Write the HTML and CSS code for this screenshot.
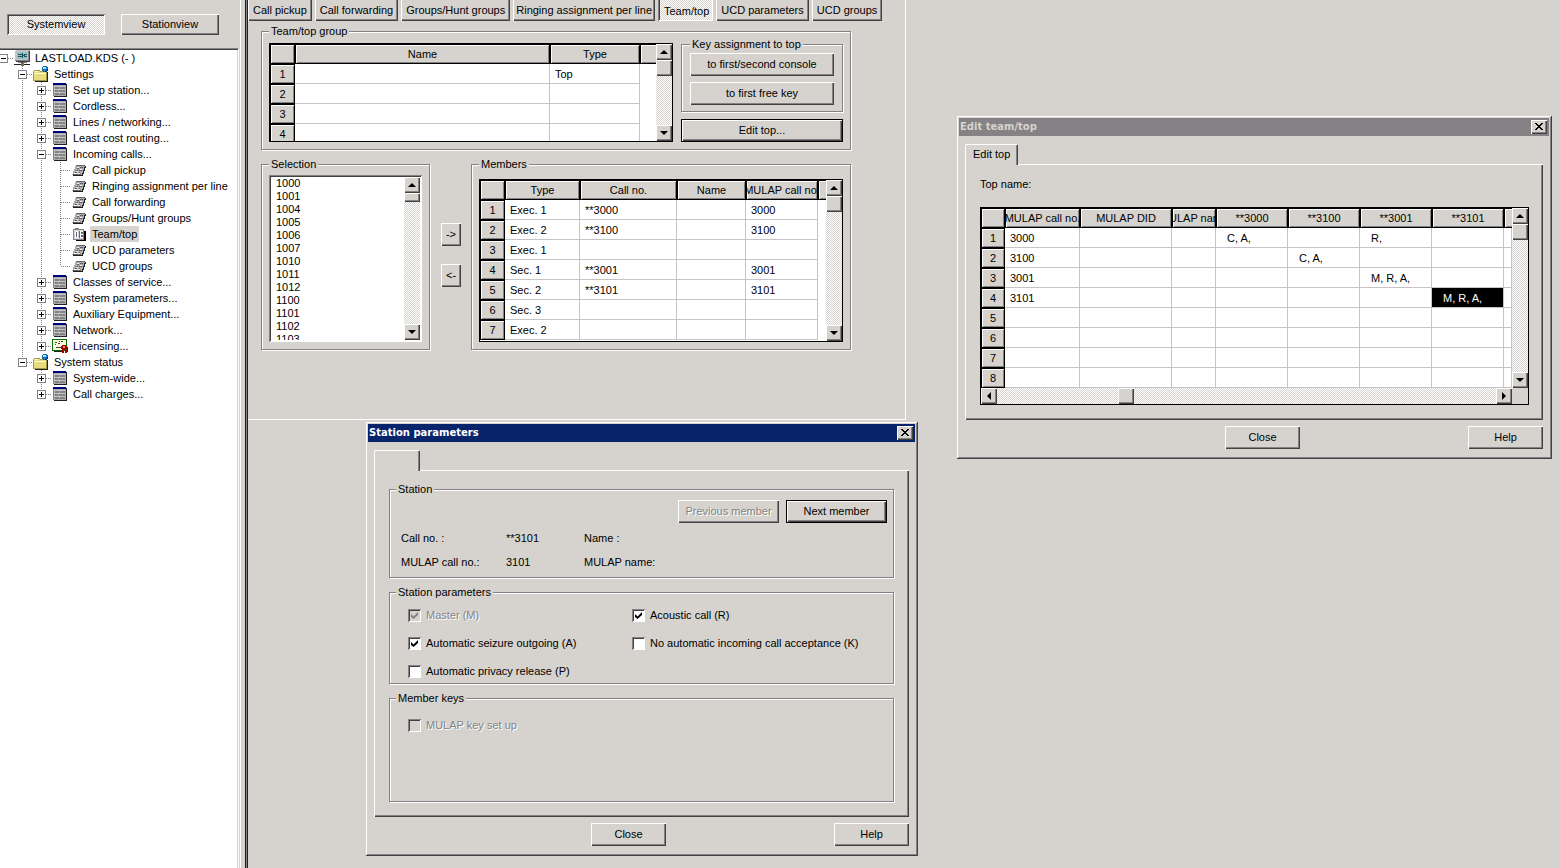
FILE: index.html
```html
<!DOCTYPE html>
<html lang="en">
<head>
<meta charset="utf-8">
<title>LASTLOAD.KDS</title>
<link rel="stylesheet" href="styles.css">
</head>
<body>
<svg class="sprite" aria-hidden="true">
  <symbol id="i-root" viewBox="0 0 18 16">
    <path fill="#848284" d="M1 1h14v10H1z"/><path fill="#c6c3c6" d="M2 0h14v1H2zM1 1h13v9H1z"/><path fill="#424142" d="M15 1h1v11H2v-1h13z"/>
    <path fill="#8cc7ce" d="M3 2h10v7H3z"/><path fill="#215152" d="M4 4h4v1H4zM4 6h4v1H4zM8 3h1v5H8zM10 4h3v1h-3zM10 6h3v1h-3zM9 5h2v1H9z"/>
    <path fill="#848284" d="M4 12h9v1H4z"/><path fill="#212021" d="M0 14h16v1H0zM8 12h1v2H8z"/><path fill="#846d42" d="M7 13h3v3H7z"/>
  </symbol>
  <symbol id="i-folder" viewBox="0 0 16 16">
    <path fill="#9c9a42" d="M1 4h5l1 1h7v10H0V5z"/><path fill="#e7db7b" d="M1 5h5l1 1h6v8H1z"/><path fill="#fffbce" d="M1 7h12v1H1zM1 5h4v1H1z"/>
    <path fill="#212021" d="M14 6h1v10H2v-1h12z"/>
    <circle cx="12" cy="3" r="3" fill="#1871b5"/><path fill="#9cefff" d="M10 1h3v2h-3z"/><path fill="#08246b" d="M12 5h2v1h-2zM14 3h1v2h-1z"/>
  </symbol>
  <symbol id="i-table" viewBox="0 0 16 16">
    <path fill="#212021" d="M2 2h13v13H2z"/><path fill="#00007b" d="M1 1h13v2H1z"/><path fill="#adaaad" d="M1 3h13v11H1z"/>
    <path fill="#848284" d="M1 3h1v11H1zM3 5h4v2H3zM8 5h5v2H8zM3 8h3v2H3zM7 8h6v2H7zM3 11h4v2H3zM8 11h5v2H8z"/><path fill="#c6c3c6" d="M2 4h11v1H2zM2 7h11v1H2zM2 10h11v1H2z"/>
  </symbol>
  <symbol id="i-key" viewBox="0 0 16 16">
    <path fill="#212021" d="M5 4h10l-3 10H2v-1z"/><path fill="#adaaad" d="M5 3h9l-3 10H1z"/>
    <path fill="#636163" d="M5 3h9v1H5zM6 6h2v1H6zM9 5h3v1H9zM5 8h2v1H5zM8 8h3v1H8zM4 10h2v1H4zM8 10h1v1H8zM2 12h8v1H2z"/><path fill="#efefef" d="M6 5h2v1H6zM9 7h2v1H9zM5 9h2v1H5zM3 11h6v1H3z"/>
  </symbol>
  <symbol id="i-team" viewBox="0 0 16 16">
    <path fill="#000" d="M13 5h2v10H5v-1h8z"/><path fill="#848284" d="M2 3h11v11H2zM4 2h4v1H4z"/><path fill="#d6d3d6" d="M3 4h9v9H3z"/><path fill="#fff" d="M4 5h3v7H4zM8 5h4v7H8z"/>
    <path fill="#636184" d="M5 6h1v5H5zM8 5h1v7H8zM10 6h2v2h-2zM10 9h2v2h-2z"/>
  </symbol>
  <symbol id="i-license" viewBox="0 0 16 16">
    <path fill="#007100" d="M0 1h15v12H0z"/><path fill="#fffbde" d="M1 2h13v10H1z"/><path fill="#424142" d="M3 4h2v1H3zM6 5h2v1H6zM9 3h2v1H9zM4 9h5v1H4zM3 6h1v1H3zM7 3h1v1H7z"/>
    <path fill="#ad0000" d="M10 7h4v5h-4zM9 8h6v3H9zM10 12h2v3h-2zM13 12h2v3h-2z"/><path fill="#ff8642" d="M11 8h2v2h-2z"/><path fill="#212021" d="M15 9h1v5h-1zM2 13h8v1H2z"/>
  </symbol>
  <symbol id="i-close" viewBox="0 0 8 7">
    <path d="M0 0h2v1H0zM6 0h2v1H6zM1 1h2v1H1zM5 1h2v1H5zM2 2h4v1H2zM3 3h2v1H3zM2 4h4v1H2zM1 5h2v1H1zM5 5h2v1H5zM0 6h2v1H0zM6 6h2v1H6z"/>
  </symbol>
</svg>

<aside class="sidebar">
  <div class="views">
    <button class="btn view pressed" type="button">Systemview</button>
    <button class="btn view" type="button">Stationview</button>
  </div>
  <nav class="tree">
    <ul class="root">
      <li>
        <div class="node"><button class="exp" type="button" aria-label="Collapse"></button><svg class="ico wide"><use href="#i-root"/></svg><span>LASTLOAD.KDS (- )</span></div>
        <ul>
          <li>
            <div class="node"><button class="exp" type="button" aria-label="Collapse"></button><svg class="ico"><use href="#i-folder"/></svg><span>Settings</span></div>
            <ul>
              <li><div class="node"><button class="exp plus" type="button" aria-label="Expand"></button><svg class="ico"><use href="#i-table"/></svg><span>Set up station...</span></div></li>
              <li><div class="node"><button class="exp plus" type="button" aria-label="Expand"></button><svg class="ico"><use href="#i-table"/></svg><span>Cordless...</span></div></li>
              <li><div class="node"><button class="exp plus" type="button" aria-label="Expand"></button><svg class="ico"><use href="#i-table"/></svg><span>Lines / networking...</span></div></li>
              <li><div class="node"><button class="exp plus" type="button" aria-label="Expand"></button><svg class="ico"><use href="#i-table"/></svg><span>Least cost routing...</span></div></li>
              <li>
                <div class="node"><button class="exp" type="button" aria-label="Collapse"></button><svg class="ico"><use href="#i-table"/></svg><span>Incoming calls...</span></div>
                <ul>
                  <li><div class="node leaf"><svg class="ico"><use href="#i-key"/></svg><span>Call pickup</span></div></li>
                  <li><div class="node leaf"><svg class="ico"><use href="#i-key"/></svg><span>Ringing assignment per line</span></div></li>
                  <li><div class="node leaf"><svg class="ico"><use href="#i-key"/></svg><span>Call forwarding</span></div></li>
                  <li><div class="node leaf"><svg class="ico"><use href="#i-key"/></svg><span>Groups/Hunt groups</span></div></li>
                  <li><div class="node leaf"><svg class="ico"><use href="#i-team"/></svg><span class="current">Team/top</span></div></li>
                  <li><div class="node leaf"><svg class="ico"><use href="#i-key"/></svg><span>UCD parameters</span></div></li>
                  <li><div class="node leaf"><svg class="ico"><use href="#i-key"/></svg><span>UCD groups</span></div></li>
                </ul>
              </li>
              <li><div class="node"><button class="exp plus" type="button" aria-label="Expand"></button><svg class="ico"><use href="#i-table"/></svg><span>Classes of service...</span></div></li>
              <li><div class="node"><button class="exp plus" type="button" aria-label="Expand"></button><svg class="ico"><use href="#i-table"/></svg><span>System parameters...</span></div></li>
              <li><div class="node"><button class="exp plus" type="button" aria-label="Expand"></button><svg class="ico"><use href="#i-table"/></svg><span>Auxiliary Equipment...</span></div></li>
              <li><div class="node"><button class="exp plus" type="button" aria-label="Expand"></button><svg class="ico"><use href="#i-table"/></svg><span>Network...</span></div></li>
              <li><div class="node"><button class="exp plus" type="button" aria-label="Expand"></button><svg class="ico"><use href="#i-license"/></svg><span>Licensing...</span></div></li>
            </ul>
          </li>
          <li>
            <div class="node"><button class="exp" type="button" aria-label="Collapse"></button><svg class="ico"><use href="#i-folder"/></svg><span>System status</span></div>
            <ul>
              <li><div class="node"><button class="exp plus" type="button" aria-label="Expand"></button><svg class="ico"><use href="#i-table"/></svg><span>System-wide...</span></div></li>
              <li><div class="node"><button class="exp plus" type="button" aria-label="Expand"></button><svg class="ico"><use href="#i-table"/></svg><span>Call charges...</span></div></li>
            </ul>
          </li>
        </ul>
      </li>
    </ul>
  </nav>
</aside>
<div class="splitter"></div>

<main class="main">
  <div class="pane">
    <div class="tabs">
      <button class="tab" type="button">Call pickup</button>
      <button class="tab" type="button">Call forwarding</button>
      <button class="tab" type="button">Groups/Hunt groups</button>
      <button class="tab long" type="button">Ringing assignment per line</button>
      <button class="tab pressed" type="button">Team/top</button>
      <button class="tab" type="button">UCD parameters</button>
      <button class="tab" type="button">UCD groups</button>
    </div>

    <div class="form">
      <fieldset class="group">
        <legend>Team/top group</legend>
        <div class="team">
          <div class="grid team-grid">
            <div class="view-port">
              <table>
                <colgroup><col class="w25"><col class="w255"><col class="w90"><col></colgroup>
                <thead><tr><th></th><th>Name</th><th>Type</th><th></th></tr></thead>
                <tbody>
                  <tr><th>1</th><td></td><td>Top</td><td class="void"></td></tr>
                  <tr><th>2</th><td></td><td></td><td class="void"></td></tr>
                  <tr><th>3</th><td></td><td></td><td class="void"></td></tr>
                  <tr><th>4</th><td></td><td></td><td class="void"></td></tr>
                </tbody>
              </table>
            </div>
            <div class="scroll"><span class="sb up"></span><span class="sb"></span><span class="sb down"></span></div>
          </div>
          <div class="side">
            <fieldset class="group keys">
              <legend>Key assignment to top</legend>
              <button class="btn" type="button">to first/second console</button>
              <button class="btn" type="button">to first free key</button>
            </fieldset>
            <button class="btn default" type="button">Edit top...</button>
          </div>
        </div>
      </fieldset>

      <div class="assign">
        <fieldset class="group">
          <legend id="sel">Selection</legend>
          <div class="list">
            <select multiple aria-labelledby="sel">
              <option>1000</option><option>1001</option><option>1004</option><option>1005</option><option>1006</option><option>1007</option><option>1010</option><option>1011</option><option>1012</option><option>1100</option><option>1101</option><option>1102</option><option>1103</option>
            </select>
            <div class="scroll"><span class="sb up"></span><span class="sb short"></span><span class="sb down"></span></div>
          </div>
        </fieldset>
        <div class="arrows">
          <button class="btn" type="button">-&gt;</button>
          <button class="btn" type="button">&lt;-</button>
        </div>
        <fieldset class="group members">
          <legend>Members</legend>
          <div class="grid members-grid">
            <div class="view-port">
              <table>
                <colgroup><col class="w25"><col class="w75"><col class="w97"><col class="w69"><col class="w72"><col></colgroup>
                <thead><tr><th></th><th>Type</th><th>Call no.</th><th>Name</th><th><div class="clip"><span>MULAP call no.</span></div></th><th></th></tr></thead>
                <tbody>
                  <tr><th>1</th><td>Exec. 1</td><td>**3000</td><td></td><td>3000</td><td class="void"></td></tr>
                  <tr><th>2</th><td>Exec. 2</td><td>**3100</td><td></td><td>3100</td><td class="void"></td></tr>
                  <tr><th>3</th><td>Exec. 1</td><td></td><td></td><td></td><td class="void"></td></tr>
                  <tr><th>4</th><td>Sec. 1</td><td>**3001</td><td></td><td>3001</td><td class="void"></td></tr>
                  <tr><th>5</th><td>Sec. 2</td><td>**3101</td><td></td><td>3101</td><td class="void"></td></tr>
                  <tr><th>6</th><td>Sec. 3</td><td></td><td></td><td></td><td class="void"></td></tr>
                  <tr><th>7</th><td>Exec. 2</td><td></td><td></td><td></td><td class="void"></td></tr>
                </tbody>
              </table>
            </div>
            <div class="scroll"><span class="sb up"></span><span class="sb"></span><span class="sb down"></span></div>
          </div>
        </fieldset>
      </div>
    </div>
  </div>
</main>

<section class="window station">
  <header class="title active"><h2>Station parameters</h2><button class="close" type="button" aria-label="Close window"><svg><use href="#i-close"/></svg></button></header>
  <div class="body">
    <div class="sheet-tab blank"></div>
    <div class="sheet">
      <fieldset class="group facts">
        <legend>Station</legend>
        <div class="nav">
          <button class="btn" type="button" disabled>Previous member</button>
          <button class="btn default" type="button">Next member</button>
        </div>
        <div class="info">
          <span>Call no. :</span><span>**3101</span><span>Name :</span>
          <span>MULAP call no.:</span><span>3101</span><span>MULAP name:</span>
        </div>
      </fieldset>
      <fieldset class="group params">
        <legend>Station parameters</legend>
        <div class="checks">
          <label class="off"><input type="checkbox" checked disabled>Master (M)</label>
          <label><input type="checkbox" checked>Acoustic call (R)</label>
          <label><input type="checkbox" checked>Automatic seizure outgoing (A)</label>
          <label><input type="checkbox">No automatic incoming call acceptance (K)</label>
          <label><input type="checkbox">Automatic privacy release (P)</label>
        </div>
      </fieldset>
      <fieldset class="group member-keys">
        <legend>Member keys</legend>
        <div class="checks">
          <label class="off"><input type="checkbox" disabled>MULAP key set up</label>
        </div>
      </fieldset>
    </div>
    <footer class="actions"><span></span><button class="btn" type="button">Close</button><button class="btn" type="button">Help</button></footer>
  </div>
</section>

<section class="window edit">
  <header class="title"><h2>Edit team/top</h2><button class="close" type="button" aria-label="Close window"><svg><use href="#i-close"/></svg></button></header>
  <div class="body">
    <div class="sheet-tab">Edit top</div>
    <div class="sheet">
      <p class="top-name">Top name:</p>
      <div class="grid edit-grid">
        <div class="view-port">
          <table>
            <colgroup><col class="w24"><col class="w75"><col class="w92"><col class="w44"><col class="w72"><col class="w72"><col class="w72"><col class="w72"><col></colgroup>
            <thead><tr><th></th><th><div class="clip"><span>MULAP call no.</span></div></th><th>MULAP DID</th><th><div class="clip"><span>MULAP name</span></div></th><th>**3000</th><th>**3100</th><th>**3001</th><th>**3101</th><th></th></tr></thead>
            <tbody>
              <tr><th>1</th><td>3000</td><td></td><td></td><td class="flag">C, A,</td><td></td><td class="flag">R,</td><td></td><td></td></tr>
              <tr><th>2</th><td>3100</td><td></td><td></td><td></td><td class="flag">C, A,</td><td></td><td></td><td></td></tr>
              <tr><th>3</th><td>3001</td><td></td><td></td><td></td><td></td><td class="flag">M, R, A,</td><td></td><td></td></tr>
              <tr><th>4</th><td>3101</td><td></td><td></td><td></td><td></td><td></td><td class="flag chosen">M, R, A,</td><td></td></tr>
              <tr><th>5</th><td></td><td></td><td></td><td></td><td></td><td></td><td></td><td></td></tr>
              <tr><th>6</th><td></td><td></td><td></td><td></td><td></td><td></td><td></td><td></td></tr>
              <tr><th>7</th><td></td><td></td><td></td><td></td><td></td><td></td><td></td><td></td></tr>
              <tr><th>8</th><td></td><td></td><td></td><td></td><td></td><td></td><td></td><td></td></tr>
            </tbody>
          </table>
        </div>
        <div class="scroll"><span class="sb up"></span><span class="sb"></span><span class="sb down"></span></div>
        <div class="scroll across"><span class="sb left"></span><span class="lead"></span><span class="sb"></span><span class="sb right"></span></div>
        <div class="corner"></div>
      </div>
    </div>
    <footer class="actions"><span></span><button class="btn" type="button">Close</button><button class="btn" type="button">Help</button></footer>
  </div>
</section>
</body>
</html>
```
FILE: styles.css
```css
:root {
  --face: #d6d3ce;
  --shade: #848284;
  --dark: #424142;
  --line: #c6c3c6;
  --raised: inset 1px 1px 0 #fff, inset -1px -1px 0 var(--dark), inset -2px -2px 0 var(--shade);
  --sunken: inset 1px 1px 0 var(--shade), inset -1px -1px 0 #fff, inset 2px 2px 0 var(--dark);
  --dither: repeating-conic-gradient(#fff 0 25%, var(--face) 0 50%) 0 0 / 2px 2px;
}

* { box-sizing: border-box; }

body {
  position: relative;
  display: flex;
  min-height: 100vh;
  margin: 0;
  background: var(--face);
  color: #000;
  font: 11px/13px "Liberation Sans", Arial, sans-serif;
}

button, select, input { font: inherit; color: inherit; }
h2, p, ul { margin: 0; padding: 0; }
ul { list-style: none; }
.sprite { position: absolute; width: 0; height: 0; }

/* Buttons */
.btn {
  height: 23px;
  padding: 0 4px;
  border: 0;
  background: var(--face);
  box-shadow: var(--raised);
  white-space: nowrap;
}
.btn.default { border: 1px solid #000; }
.btn:disabled, .off { color: var(--shade); text-shadow: 1px 1px 0 #fff; }
.btn.pressed { background: var(--dither); box-shadow: var(--sunken); }

/* Sidebar and tree */
.sidebar { display: flex; flex: none; flex-direction: column; width: 239px; }
.views { display: flex; gap: 16px; padding: 14px 7px 13px; }
.view { width: 98px; height: 21px; }
.tree {
  flex: 1;
  border-top: 1px solid var(--shade);
  border-right: 1px solid #fff;
  background: #fff;
  box-shadow: inset 0 1px 0 var(--dark), inset -1px 0 0 var(--face);
  padding-top: 1px;
}
.splitter {
  flex: none;
  width: 9px;
  border-left: 1px solid var(--face);
  background: linear-gradient(to right, #fff 0 1px, var(--face) 1px 5px, #212021 5px 6px, var(--shade) 6px 7px, #212021 7px 8px);
}
.tree li { position: relative; }
.tree li ul { padding-left: 19px; }
.tree li li::before {
  content: "";
  position: absolute;
  top: 0;
  bottom: 0;
  left: 3px;
  width: 1px;
  background: repeating-linear-gradient(var(--shade) 0 1px, transparent 1px 2px);
}
.tree li li:last-child::before { bottom: auto; height: 8px; }
.node { position: relative; display: flex; align-items: center; height: 16px; white-space: nowrap; }
.node::before {
  content: "";
  position: absolute;
  top: 8px;
  left: 4px;
  width: 10px;
  height: 1px;
  background: repeating-linear-gradient(to right, var(--shade) 0 1px, transparent 1px 2px);
}
.exp {
  z-index: 1;
  width: 9px;
  height: 9px;
  margin: 0 6px 0 -1px;
  padding: 0;
  border: 1px solid var(--shade);
  background: linear-gradient(#000, #000) center / 5px 1px no-repeat, #fff;
}
.exp.plus { background: linear-gradient(#000, #000) center / 5px 1px no-repeat, linear-gradient(#000, #000) center / 1px 5px no-repeat, #fff; }
.ico { z-index: 1; width: 16px; height: 16px; margin-right: 3px; shape-rendering: crispEdges; }
.ico.wide { width: 18px; margin-right: 1px; }
.leaf { padding-left: 14px; }
.node span { height: 16px; padding: 0 2px; line-height: 16px; }
.node .current { background: var(--face); }

/* Main pane */
.main { flex: 1; min-width: 0; }
.pane {
  width: fit-content;
  padding-bottom: 69px;
  border-right: 1px solid #fff;
  border-bottom: 1px solid #fff;
}
.tabs { display: flex; gap: 3px; }
.tab {
  height: 21px;
  padding: 0 5px;
  border: 0;
  background: var(--face);
  box-shadow: inset 1px 0 0 #fff, inset -1px -1px 0 var(--dark), inset -2px -2px 0 var(--shade);
  white-space: nowrap;
}
.tab.long { padding: 0 3px; }
.tab.pressed {
  padding: 2px 4px 0 6px;
  background: var(--dither);
  box-shadow: inset 1px 0 0 var(--shade), inset -1px -1px 0 #fff, inset 2px 0 0 var(--dark);
}
.form { display: flex; flex-direction: column; gap: 8px; padding: 4px 54px 0 13px; }

.group {
  min-width: 0;
  margin: 0;
  padding: 0 7px 7px;
  border: 1px solid var(--shade);
  box-shadow: inset 1px 1px 0 #fff, 1px 1px 0 #fff;
}
.group legend { height: 13px; padding: 0 2px; background: var(--face); }

.team { display: flex; gap: 8px; }
.side { display: flex; flex-direction: column; gap: 7px; width: 162px; }
.keys { padding: 2px 8px 6px; }
.keys .btn { display: block; width: 100%; }
.keys .btn + .btn { margin-top: 6px; }

.assign { display: flex; contain: inline-size; }
.list {
  display: flex;
  width: 153px;
  height: 167px;
  margin-top: 4px;
  padding: 2px;
  background: #fff;
  box-shadow: var(--sunken);
}
.list select {
  flex: 1;
  min-width: 0;
  height: 163px;
  padding: 0;
  border: 0;
  outline: 0;
  background: transparent;
  overflow: hidden;
}
.list option { height: 13px; min-height: 0; padding: 0 5px; line-height: 13px; }
.arrows { display: flex; flex-direction: column; gap: 18px; padding: 65px 10px 0 11px; }
.arrows .btn { width: 20px; padding: 0; }
.members { flex: 1; }

/* Data grids */
.grid { display: grid; grid-template-columns: 1fr 16px; border: 1px solid #000; background: #fff; }
.team-grid { width: 404px; height: 99px; margin-top: 5px; }
.members-grid { height: 163px; margin-top: 8px; }
.edit-grid { grid-template-rows: 180px 16px; }
.view-port { min-width: 0; min-height: 0; overflow: hidden; }
.grid table { width: 100%; border-spacing: 0; table-layout: fixed; }
.grid tr { height: 20px; }
.grid th {
  height: 20px;
  padding: 0;
  border: 1px solid #000;
  background: var(--face);
  box-shadow: inset 1px 1px 0 #fff, inset -1px -1px 0 var(--shade);
  font-weight: normal;
  overflow: hidden;
}
.grid td {
  height: 20px;
  padding: 1px 0 0 5px;
  border: solid var(--line);
  border-width: 0 1px 1px 0;
  white-space: nowrap;
}
.grid td.void { border: 0; }
.grid td.flag { padding-left: 11px; }
.grid td.chosen { background: #000; background-clip: padding-box; color: #fff; }
.grid thead th:last-child { border-right: 0; box-shadow: inset 1px 1px 0 #fff, inset 0 -1px 0 var(--shade); }
.clip { display: flex; justify-content: center; overflow: hidden; white-space: nowrap; }
.clip span { flex: none; }
.w24 { width: 24px; }
.w25 { width: 25px; }
.w44 { width: 44px; }
.w69 { width: 69px; }
.w72 { width: 72px; }
.w75 { width: 75px; }
.w90 { width: 90px; }
.w92 { width: 92px; }
.w97 { width: 97px; }
.w255 { width: 255px; }

/* Scroll bars */
.scroll { display: flex; flex: none; flex-direction: column; width: 16px; background: var(--dither); }
.scroll.across { flex-direction: row; width: auto; }
.sb { display: grid; flex: none; place-items: center; width: 16px; height: 16px; background: var(--face); box-shadow: var(--raised); }
.sb.short { height: 9px; }
.sb.down { margin-top: auto; }
.sb.right { margin-left: auto; }
.sb.up::before, .sb.down::before, .sb.left::before, .sb.right::before { content: ""; background: #000; }
.sb.up::before, .sb.down::before { width: 8px; height: 4px; }
.sb.left::before, .sb.right::before { width: 4px; height: 8px; }
.sb.up::before { clip-path: polygon(50% 0, 100% 100%, 0 100%); }
.sb.down::before { clip-path: polygon(0 0, 100% 0, 50% 100%); }
.sb.left::before { clip-path: polygon(100% 0, 100% 100%, 0 50%); }
.sb.right::before { clip-path: polygon(0 0, 100% 50%, 0 100%); }
.lead { flex: 0 0 121px; }
.corner { background: var(--face); }

/* Windows */
.window {
  position: absolute;
  padding: 3px;
  background: var(--face);
  box-shadow: inset 1px 1px 0 var(--face), inset -1px -1px 0 var(--dark), inset 2px 2px 0 #fff, inset -2px -2px 0 var(--shade);
}
.station { top: 421px; left: 365px; width: 553px; }
.edit { top: 115px; left: 956px; width: 596px; }
.title { display: flex; align-items: center; justify-content: space-between; height: 18px; padding: 0 2px 0 1px; background: var(--shade); color: var(--face); }
.title.active { background: #08246b; color: #fff; }
.title h2 { font: bold 10px/18px "DejaVu Sans", Verdana, sans-serif; }
.close { display: grid; place-items: center; width: 16px; height: 14px; padding: 0 1px 1px 0; border: 0; background: var(--face); box-shadow: var(--raised); }
.close svg { width: 8px; height: 7px; shape-rendering: crispEdges; }
.body { padding: 8px 6px 7px; }
.sheet-tab {
  position: relative;
  z-index: 1;
  width: fit-content;
  height: 21px;
  margin-bottom: -1px;
  padding: 3px 7px;
  border: solid;
  border-width: 1px 1px 0;
  border-color: #fff var(--dark) #fff #fff;
  border-radius: 2px 2px 0 0;
  background: var(--face);
  box-shadow: inset -1px 0 0 var(--shade);
}
.sheet-tab.blank { width: 46px; }
.sheet { padding: 1px 15px 15px; box-shadow: var(--raised); }
.actions { display: grid; grid-template-columns: 217px auto 1fr; padding-top: 6px; }
.actions .btn { width: 75px; }
.actions .btn:last-child { justify-self: end; }

.edit .sheet { padding-right: 14px; }
.edit .actions { grid-template-columns: 260px auto 1fr; }
.top-name { padding: 13px 0 16px; }

.station .sheet { display: flex; flex-direction: column; gap: 8px; padding-top: 13px; }
.facts, .params, .member-keys { padding: 0 6px 8px; }
.nav { display: flex; justify-content: flex-end; gap: 7px; padding-top: 4px; }
.nav .btn { width: 101px; }
.info { display: grid; grid-template-columns: 105px 78px 1fr; row-gap: 11px; padding: 9px 0 0 5px; }
.checks { display: grid; grid-template-columns: 224px 1fr; row-gap: 15px; padding: 10px 0 0 12px; }
.checks label { display: flex; align-items: center; gap: 5px; white-space: nowrap; }
.checks input {
  display: grid;
  place-items: center;
  width: 13px;
  height: 13px;
  margin: 0;
  appearance: none;
  background: #fff;
  box-shadow: var(--sunken);
}
.checks input:disabled { background: var(--face); }
.checks input:checked::before {
  content: "";
  width: 7px;
  height: 7px;
  background: #000;
  clip-path: polygon(0 30%, 36% 64%, 100% 0, 100% 42%, 36% 100%, 0 72%);
}
.checks input:checked:disabled::before { background: var(--shade); }
.params { padding-bottom: 5px; }
.member-keys { padding-bottom: 69px; }
.member-keys .checks { padding-top: 14px; }
```
